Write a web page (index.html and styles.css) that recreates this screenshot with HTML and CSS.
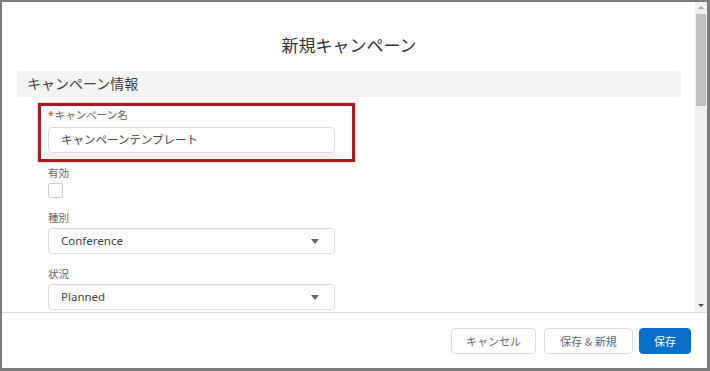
FILE: index.html
```html
<!DOCTYPE html>
<html>
<head>
    <title>新規キャンペーン</title>
    <link rel="stylesheet" href="styles.css">
</head>
<body>
    <div class="frame">
        <div class="modal-body">
            <div class="scroll-content">
                <h2 class="modal-title">新規キャンペーン</h2>
                <div class="section-header">キャンペーン情報</div>

                <div class="highlight">
                    <label class="field-label"><span class="required">*</span>キャンペーン名</label>
                    <div class="text-input">キャンペーンテンプレート</div>
                </div>

                <div class="field">
                    <label class="field-label">有効</label>
                    <span class="checkbox"></span>
                </div>

                <div class="field">
                    <label class="field-label">種別</label>
                    <div class="select">
                        <span>Conference</span>
                        <span class="caret"></span>
                    </div>
                </div>

                <div class="field">
                    <label class="field-label">状況</label>
                    <div class="select">
                        <span>Planned</span>
                        <span class="caret"></span>
                    </div>
                </div>
            </div>

            <!-- ブラウザのスクロールバー -->
            <div class="scrollbar">
                <span class="arrow up"></span>
                <div class="track">
                    <div class="thumb"></div>
                </div>
                <span class="arrow down"></span>
            </div>
        </div>

        <div class="modal-footer">
            <button class="btn btn-cancel">キャンセル</button>
            <button class="btn btn-savenew">保存 &amp; 新規</button>
            <button class="btn btn-brand">保存</button>
        </div>
    </div>
</body>
</html>
```

FILE: styles.css
```css
html, body {
    margin: 0;
    padding: 0;
}

body {
    width: 710px;
    height: 371px;
    background-color: #7b7b7b;
    font-family: "Noto Sans", "Noto Sans CJK JP", sans-serif;
    color: #333;
}

.frame {
    box-sizing: border-box;
    width: 710px;
    height: 371px;
    border-top: 2px solid #7b7b7b;
    border-left: 2px solid #7b7b7b;
    border-right: 3px solid #7b7b7b;
    border-bottom: 3px solid #7b7b7b;
    background-color: #fff;
    display: flex;
    flex-direction: column;
}

.modal-body {
    height: 310px;
    display: flex;
    flex-direction: row;
    overflow: hidden;
}

.scroll-content {
    flex: 1;
    padding: 0 14px 0 15px;
    overflow: hidden;
}

.modal-title {
    margin: 32px 0 13px 0;
    font-size: 17px;
    line-height: 24px;
    font-weight: normal;
    text-align: center;
    color: #333;
}

.section-header {
    height: 26px;
    line-height: 26px;
    padding-left: 10px;
    background-color: #f3f3f3;
    border-radius: 2px;
    font-size: 14px;
    color: #444;
}

/* 赤枠（注釈） */
.highlight {
    width: 304px;
    margin: 6px 0 0 21px;
    padding: 2px 0 6px 7px;
    border: 3px solid #a81d1d;
    box-shadow: 0 0 2px rgba(200, 40, 40, 0.5);
}

.field {
    margin: 4px 0 0 31px;
}

.field + .field {
    margin-top: 13px;
}

.field-label {
    display: block;
    font-size: 10.5px;
    line-height: 14px;
    color: #666;
}

.required {
    color: #c23934;
    margin-right: 1px;
}

.text-input, .select {
    box-sizing: border-box;
    width: 287px;
    height: 26px;
    margin-top: 5px;
    padding: 0 12px;
    border: 1px solid #dcdcdc;
    border-radius: 4px;
    font-size: 11.5px;
    line-height: 24px;
    color: #444;
}

.select {
    margin-top: 3px;
    display: flex;
    justify-content: space-between;
    align-items: center;
}

.caret {
    width: 0;
    height: 0;
    margin-right: 3px;
    border-left: 4px solid transparent;
    border-right: 4px solid transparent;
    border-top: 5px solid #666;
}

.checkbox {
    display: block;
    box-sizing: border-box;
    width: 15px;
    height: 15px;
    margin-top: 3px;
    border: 1px solid #cfcfcf;
    border-radius: 2px;
}

/* スクロールバー */
.scrollbar {
    width: 12px;
    background-color: #f0f0f0;
    display: flex;
    flex-direction: column;
    align-items: center;
}

.arrow {
    width: 0;
    height: 0;
    border-left: 3px solid transparent;
    border-right: 3px solid transparent;
}

.arrow.up {
    margin: 4px 0 5px 0;
    border-bottom: 3px solid #a3a3a3;
}

.arrow.down {
    margin: 5px 0 5px 0;
    border-top: 3px solid #505050;
}

.track {
    flex: 1;
    width: 10px;
}

.thumb {
    height: 92px;
    background-color: #c1c1c1;
}

.modal-footer {
    flex: 1;
    border-top: 1px solid #dcdcdc;
    display: flex;
    justify-content: flex-end;
    align-items: center;
    padding-right: 16px;
}

.btn {
    height: 26px;
    padding: 0 14px;
    background-color: #fff;
    border: 1px solid #dcdcdc;
    border-radius: 4px;
    font-family: "Noto Sans CJK JP", sans-serif;
    font-size: 11px;
    color: #5b6b85;
    cursor: pointer;
}

.btn-cancel {
    width: 85px;
    margin-right: 8px;
}

.btn-savenew {
    width: 89px;
    margin-right: 6px;
}

.btn-brand {
    width: 52px;
    background-color: #0b6fcc;
    border-color: #0b6fcc;
    color: #fff;
}
```
